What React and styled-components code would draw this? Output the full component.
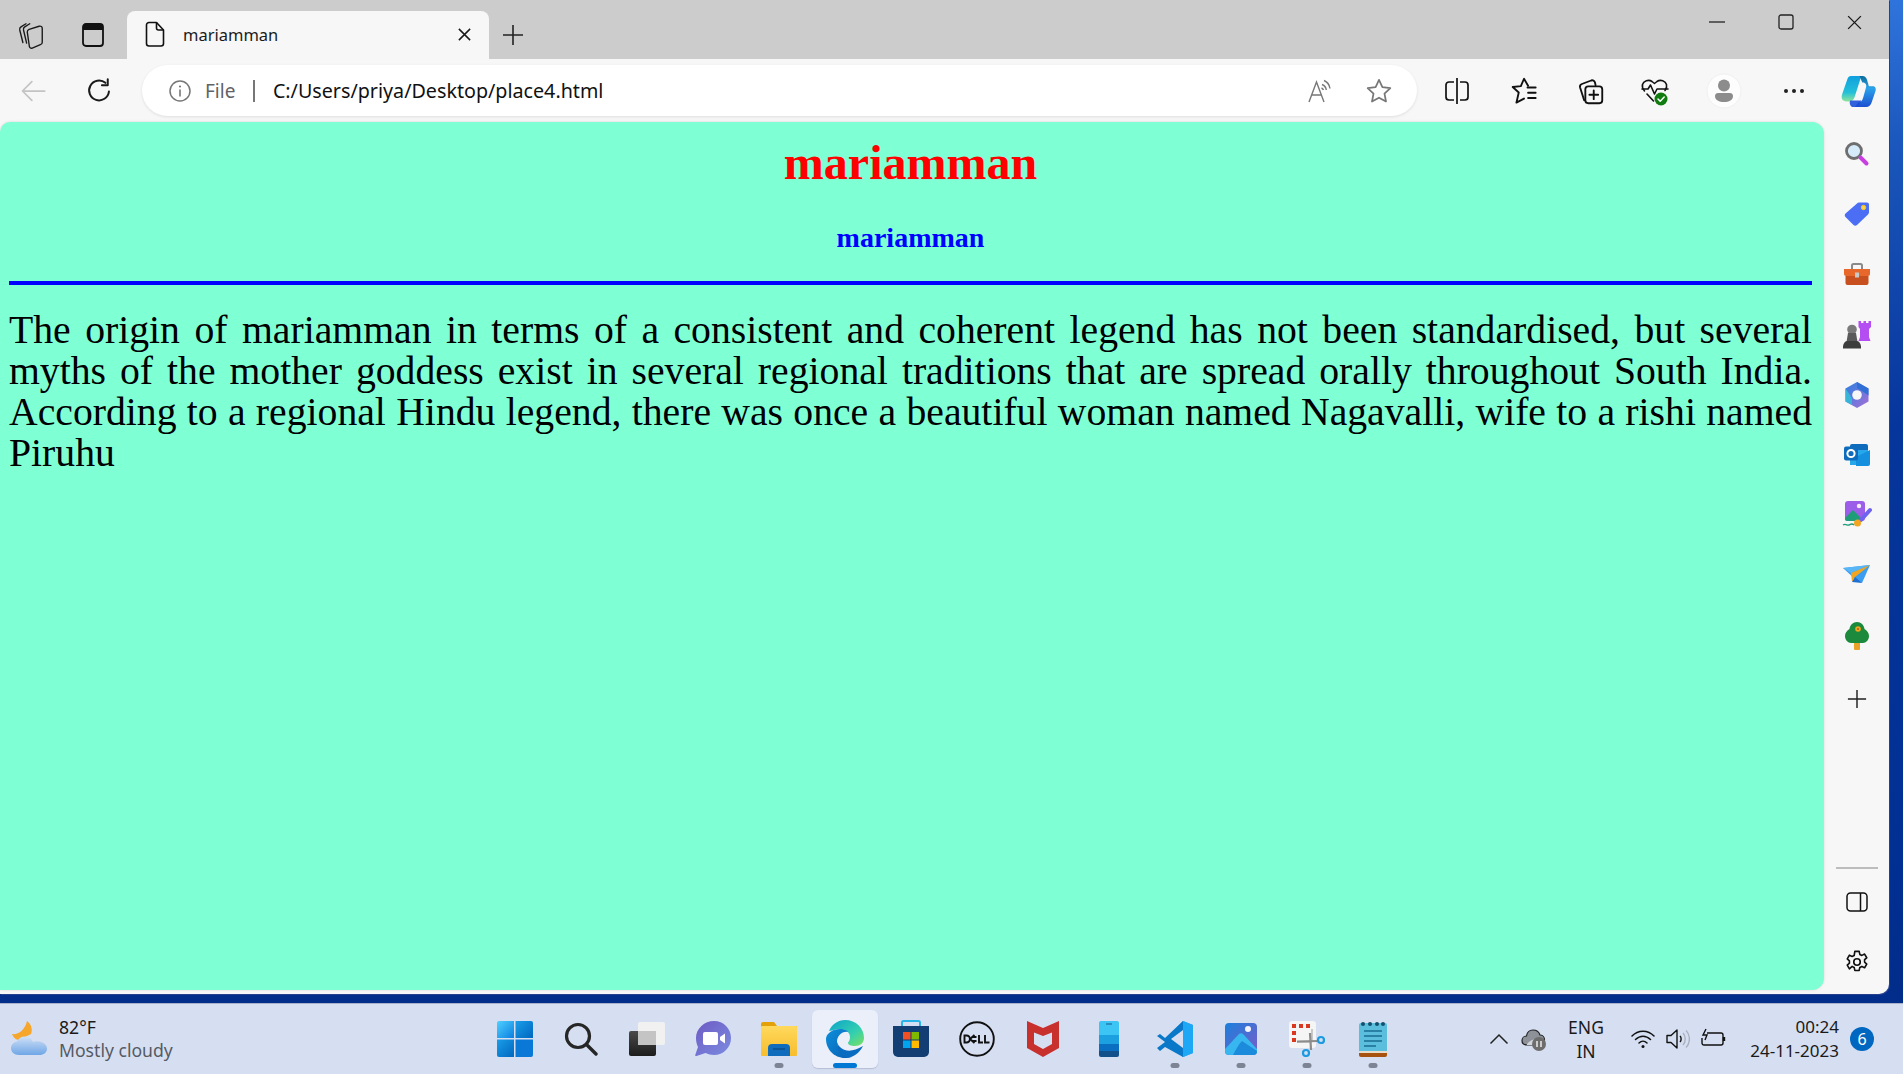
import React from "react";
import styled, { createGlobalStyle } from "styled-components";

const GlobalStyle = createGlobalStyle`
  html, body {
    margin: 0;
    padding: 0;
    overflow: hidden;
  }
  * {
    box-sizing: border-box;
  }
`;

const uiFont = `"Noto Sans", "Open Sans", sans-serif`;

const Desktop = styled.div`
  width: 1903px;
  height: 1074px;
  display: flex;
  flex-direction: column;
  overflow: hidden;
  font-family: ${uiFont};
  background: linear-gradient(180deg, #2f74dc 0%, #1a56bb 14%, #06359b 40%, #012f92 80%, #032b85 100%);
`;

const BrowserWindow = styled.div`
  width: 1889px;
  height: 994px;
  flex: none;
  display: flex;
  flex-direction: column;
  background: #f7f7f7;
  border-bottom-right-radius: 10px;
  box-shadow: 1px 1px 0 #24408f;
  overflow: hidden;
`;

const TitleBar = styled.div`
  height: 59px;
  flex: none;
  display: flex;
  align-items: flex-end;
  background: #cccccc;
`;

const TitleCell = styled.div`
  width: ${(props) => props.$width || 62}px;
  height: 48px;
  flex: none;
  display: flex;
  align-items: center;
  justify-content: center;
`;

const Tab = styled.div`
  width: 362px;
  height: 48px;
  margin-left: 3px;
  padding: 0 17px 2px 18px;
  flex: none;
  display: flex;
  align-items: center;
  background: #f7f7f7;
  border-radius: 8px 8px 0 0;
`;

const TabTitle = styled.span`
  margin-left: 18px;
  font-size: 16.5px;
  color: #1a1a1a;
`;

const TabClose = styled.div`
  margin-left: auto;
  display: flex;
`;

const WindowControls = styled.div`
  margin-left: auto;
  height: 44px;
  align-self: flex-start;
  display: flex;
`;

const WindowControl = styled.div`
  width: 69px;
  display: flex;
  align-items: center;
  justify-content: center;
`;

const Toolbar = styled.div`
  height: 63px;
  flex: none;
  display: flex;
  align-items: center;
`;

const NavCell = styled.div`
  width: ${(props) => props.$width || 66}px;
  height: 50px;
  flex: none;
  display: flex;
  align-items: center;
  justify-content: center;
`;

const AddressBar = styled.div`
  width: 1275px;
  height: 51px;
  margin-left: 10px;
  margin-right: 6px;
  padding: 0 24px 0 26px;
  flex: none;
  display: flex;
  align-items: center;
  background: #ffffff;
  border-radius: 26px;
  box-shadow: 0 1px 3px rgba(0, 0, 0, 0.1);
`;

const FileLabel = styled.span`
  margin-left: 13px;
  font-size: 19px;
  color: #5f6368;
`;

const Separator = styled.span`
  width: 1.5px;
  height: 22px;
  margin: 0 18px;
  background: #777777;
`;

const Url = styled.span`
  font-size: 19.7px;
  color: #111111;
`;

const AddressActions = styled.div`
  margin-left: auto;
  display: flex;
  align-items: center;
  gap: 32px;
`;

const Main = styled.div`
  flex: 1;
  display: flex;
  min-height: 0;
`;

const Page = styled.main`
  width: 1824px;
  height: 868px;
  flex: none;
  padding: 0 12px 0 9px;
  background: #7fffd4;
  border-radius: 10px 12px 12px 0;
  box-shadow: 0 0 3px rgba(0, 0, 0, 0.12);
  font-family: "Liberation Serif", "Times New Roman", serif;
`;

const PageTitle = styled.h1`
  margin: 13px 0 0;
  font-size: 48px;
  line-height: 55px;
  font-weight: 700;
  text-align: center;
  color: #ff0000;
`;

const PageSubtitle = styled.h2`
  margin: 32px 0 0;
  font-size: 28px;
  line-height: 32px;
  font-weight: 700;
  text-align: center;
  color: #0000ff;
`;

const Rule = styled.hr`
  height: 4px;
  margin: 27px 0 0;
  border: 0;
  background: #0000ff;
`;

const BodyText = styled.p`
  margin: 25px 0 0;
  font-size: 39.7px;
  line-height: 41px;
  text-align: justify;
  color: #000000;
`;

const Sidebar = styled.aside`
  width: 65px;
  flex: none;
  display: flex;
  flex-direction: column;
  align-items: center;
  padding: 2px 0 2px;
`;

const SideCell = styled.div`
  width: 100%;
  height: 60.2px;
  flex: none;
  margin-top: ${(props) => props.$gap || 0}px;
  display: flex;
  align-items: center;
  justify-content: center;
`;

const SideDivider = styled.div`
  width: 42px;
  height: 2px;
  margin-top: auto;
  margin-bottom: 3px;
  background: #bdbdbd;
`;

const Taskbar = styled.footer`
  height: 71px;
  margin-top: 9px;
  flex: none;
  display: grid;
  grid-template-columns: 482px auto 1fr;
  align-items: center;
  background: #d6dff2;
  border-top: 1px solid #a9b2c8;
`;

const Weather = styled.div`
  display: flex;
  align-items: center;
  padding-left: 11px;
  gap: 10px;
`;

const WeatherText = styled.div`
  display: flex;
  flex-direction: column;
  font-size: 17.6px;
  line-height: 23px;
`;

const WeatherTemp = styled.span`
  color: #1a1a1a;
`;

const WeatherInfo = styled.span`
  color: #555a63;
`;

const TaskIcons = styled.div`
  display: flex;
`;

const TaskItem = styled.div`
  position: relative;
  width: 66px;
  height: 58px;
  display: flex;
  align-items: center;
  justify-content: center;
  border-radius: 6px;
  background: ${(props) => (props.$active ? "rgba(255,255,255,.5)" : "transparent")};
  box-shadow: ${(props) => (props.$active ? "0 1px 1px rgba(120,130,160,.35)" : "none")};
`;

const RunDot = styled.span`
  position: absolute;
  left: 50%;
  bottom: 0;
  height: 5px;
  width: ${(props) => (props.$active ? 24 : 9)}px;
  transform: translateX(-50%);
  border-radius: 3px;
  background: ${(props) => (props.$active ? "#0078d4" : "#7d8494")};
`;

const Tray = styled.div`
  display: flex;
  align-items: center;
  padding-left: 78px;
  color: #1a1a1a;
`;

const TrayIcon = styled.div`
  width: ${(props) => props.$width}px;
  flex: none;
  display: flex;
  justify-content: center;
`;

const Language = styled.div`
  width: 60px;
  flex: none;
  margin: 0 9px 0 2px;
  font-size: 17.5px;
  line-height: 24px;
  text-align: center;
`;

const Clock = styled.div`
  width: 110px;
  margin-left: -4px;
  font-size: 17px;
  line-height: 24px;
  text-align: right;
`;

const Badge = styled.span`
  width: 24px;
  height: 24px;
  margin-left: 11px;
  flex: none;
  display: flex;
  align-items: center;
  justify-content: center;
  border-radius: 50%;
  font-size: 16px;
  color: #ffffff;
  background: #0067c0;
`;

const Line = ({ size = 24, width = 1.6, color = "#1a1a1a", children }) => (
  <svg width={size} height={size} viewBox="0 0 24 24" fill="none" stroke={color} strokeWidth={width} strokeLinecap="round" strokeLinejoin="round">
    {children}
  </svg>
);

const Art = ({ w = 40, h = 40, box = "0 0 40 40", children }) => (
  <svg width={w} height={h} viewBox={box}>
    {children}
  </svg>
);

const Workspaces = () => (
  <Line size={30} width={1.1}>
    <path d="M8 3 4 5.500C3 6.100 2.800 7 3 8l2.500 10" />
    <path d="M11 3 7 5.500C6 6.100 5.800 7 6 8l2.500 10.500" />
    <path d="M9 9.500c0-1 .6-1.700 1.500-2l8-2.500c1.500-.4 2.500.5 2.500 1.700v11c0 1-.5 1.700-1.500 2l-6.500 2.800c-1.200.4-2-.3-2.300-1.300z" />
  </Line>
);

const TabActions = () => (
  <svg width="24" height="26" viewBox="0 0 24 26">
    <rect x="2" y="2" width="20" height="22" rx="3" fill="none" stroke="#111" strokeWidth="1.800" />
    <path d="M2 5a3 3 0 0 1 3-3h14a3 3 0 0 1 3 3v3H2z" fill="#111" />
  </svg>
);

const FileIcon = () => (
  <svg width="20" height="26" viewBox="0 0 20 26" fill="none" stroke="#111" strokeWidth="1.600" strokeLinejoin="round">
    <path d="M4 1.500h7.500L18.500 9v13.500a2.500 2.500 0 0 1-2.500 2.500H4a2.500 2.500 0 0 1-2.500-2.500v-18.500A2.500 2.500 0 0 1 4 1.500z" />
    <path d="M11.500 1.500V7a2 2 0 0 0 2 2h5" />
  </svg>
);

const CloseIcon = ({ size = 16, width = 1.600 }) => (
  <svg width={size} height={size} viewBox="0 0 16 16" stroke="#1a1a1a" strokeWidth={width} fill="none">
    <path d="M2 2 14 14M14 2 2 14" />
  </svg>
);

const PlusIcon = ({ size = 22, color = "#222" }) => (
  <svg width={size} height={size} viewBox="0 0 22 22" stroke={color} strokeWidth="1.600" fill="none">
    <path d="M11 1v20M1 11h20" />
  </svg>
);

const BackIcon = () => (
  <Line size={28} width={1.500} color="#c4c4c4">
    <path d="M22 12H3M11 4l-8 8 8 8" />
  </Line>
);

const RefreshIcon = () => (
  <Line size={28} width={1.700} color="#1a1a1a">
    <path d="M20.500 12.500a8.500 8.500 0 1 1-3-7.500" />
    <path d="M19.500 2v5h-5" />
  </Line>
);

const InfoIcon = () => (
  <svg width="24" height="24" viewBox="0 0 24 24" fill="none">
    <circle cx="12" cy="12" r="10" stroke="#777" strokeWidth="1.500" />
    <path d="M12 10.500V17.500" stroke="#777" strokeWidth="1.600" />
    <circle cx="12" cy="7.500" r="1.100" fill="#777" />
  </svg>
);

const ReadAloud = () => (
  <svg width="26" height="26" viewBox="0 0 26 26" fill="none" stroke="#777" strokeWidth="1.400">
    <path d="M2 24 9.500 4 17 24M5 17h9" />
    <path d="M15 6.500c2.500 1 4 3 4.300 5.500M17 2.500c3.500 1.500 5.500 4.500 6 8M14.500 10c1 .4 1.600 1 2 2" />
  </svg>
);

const StarIcon = ({ color = "#777" }) => (
  <Line size={28} width={1.500} color={color}>
    <path d="m12 2.500 2.900 6.200 6.800.9-5 4.700 1.300 6.700-6-3.300-6 3.300 1.300-6.700-5-4.700 6.800-.9z" />
  </Line>
);

const SplitIcon = () => (
  <svg width="26" height="28" viewBox="0 0 26 28" fill="none" stroke="#111" strokeWidth="1.700">
    <path d="M13 1v26" />
    <path d="M10 5H5a3 3 0 0 0-3 3v12a3 3 0 0 0 3 3h5M16 5h5a3 3 0 0 1 3 3v12a3 3 0 0 1-3 3h-5" />
  </svg>
);

const FavoritesIcon = () => (
  <Line size={28} width={1.600} color="#111">
    <path d="M15.500 7.500 12 1.500 9.300 7.800l-7 .8 5.200 4.700L5.500 22l6.500-3.500" />
    <path d="M15 9h7M15.500 13.500H22M15.500 18H22" />
  </Line>
);

const CollectionsIcon = () => (
  <Line size={28} width={1.600} color="#111">
    <path d="M7 20 3.500 9c-.4-1.500.2-2.500 1.500-3l8-3c1.500-.5 2.800.2 3.200 1.500l.6 2.500" />
    <rect x="8" y="8" width="14.500" height="14.500" rx="2.500" />
    <path d="M15.200 11.500v7.500M11.500 15.200H19" />
  </Line>
);

const HealthIcon = () => (
  <svg width="30" height="30" viewBox="0 0 30 30" fill="none" stroke="#111" strokeWidth="1.600" strokeLinejoin="round" strokeLinecap="round">
    <path d="M4.500 15C2.500 12.500 2 10.500 2.500 8.500 3.500 5 8.500 3 12 5.500l2.500 2 2.500-2c3.500-2.500 8.500-.5 9.500 3 .5 2 0 4-1.500 6" />
    <path d="M2 13h6l2.500-4 4 9 2.500-5h11" />
    <path d="m7 18 6.500 7" />
    <circle cx="21" cy="23" r="6.500" fill="#107c10" stroke="none" />
    <path d="m18 23 2.200 2.200 4-4.200" stroke="#fff" strokeWidth="1.500" />
  </svg>
);

const ProfileIcon = () => (
  <svg width="36" height="42" viewBox="0 0 36 42">
    <circle cx="18" cy="21" r="17" fill="#fdfdfd" stroke="#f0f0f0" />
    <circle cx="18" cy="15.500" r="6" fill="#8c8c8c" />
    <path d="M9 26c0-2 1.500-3 3-3h12c1.500 0 3 1 3 3 0 4-4 6-9 6s-9-2-9-6z" fill="#8c8c8c" />
  </svg>
);

const DotsIcon = () => (
  <svg width="22" height="6" viewBox="0 0 22 6" fill="#222">
    <circle cx="3" cy="3" r="2" />
    <circle cx="11" cy="3" r="2" />
    <circle cx="19" cy="3" r="2" />
  </svg>
);

const CopilotIcon = () => (
  <Art w={37} h={34} box="0 0 38 36">
    <defs>
      <linearGradient id="cop1" x1="0" y1="0" x2="0" y2="1">
        <stop offset="0" stopColor="#0f9fe0" />
        <stop offset="0.65" stopColor="#23c0d8" />
        <stop offset="1" stopColor="#8ee59a" />
      </linearGradient>
      <linearGradient id="cop2" x1="0" y1="0" x2="0" y2="1">
        <stop offset="0" stopColor="#0b6a9a" />
        <stop offset="0.4" stopColor="#2aa2ea" />
        <stop offset="1" stopColor="#1c4fd0" />
      </linearGradient>
    </defs>
    <path d="M11 2h11l-7 22c-.8 3-3 5-6 5H6C2 29 .5 26 1.500 22L7 6c.6-2.500 2-4 4-4z" fill="url(#cop1)" />
    <path d="M20 2h3c3 0 4.500 2 5 4l2 7h4c2.500 0 4 2 3 5l-4 12c-1 3-3 5-6 5h-12l4-5c3 0 4-2 5-5l3-11c1-3-1-5-4-5z" fill="url(#cop2)" />
    <path d="M10 28h12l-3 7h-6c-2 0-4-3-3-7z" fill="#1a4fd8" opacity=".9" />
  </Art>
);

const MinIcon = () => (
  <svg width="16" height="4" viewBox="0 0 16 4" stroke="#222" strokeWidth="1.300">
    <path d="M0 2h16" />
  </svg>
);

const MaxIcon = () => (
  <svg width="16" height="16" viewBox="0 0 16 16" fill="none" stroke="#222" strokeWidth="1.300">
    <rect x="1" y="1" width="14" height="14" rx="2" />
  </svg>
);

const SearchSide = () => (
  <Art w={26} h={26} box="0 0 26 26">
    <circle cx="10" cy="10" r="7.500" fill="#d6ebfa" stroke="#6e6e6e" strokeWidth="2.800" />
    <path d="m16.500 16.500 6 6" stroke="#c83ee0" strokeWidth="4" strokeLinecap="round" />
  </Art>
);

const TagSide = () => (
  <Art w={26} h={26} box="0 0 26 26">
    <path d="M15 1.500h8a2 2 0 0 1 2 2v8a3 3 0 0 1-1 2L13 24c-1 1-2.500 1-3.500 0l-8-8c-1-1-1-2.500 0-3.500L13 2.500a3 3 0 0 1 2-1z" fill="#4c6ef5" />
    <circle cx="19.500" cy="6.500" r="2.200" fill="#ffd23f" stroke="#e8c33a" />
  </Art>
);

const ToolboxSide = () => (
  <Art w={28} h={24} box="0 0 28 24">
    <path d="M9 7V3.500A1.500 1.500 0 0 1 10.500 2h7A1.500 1.500 0 0 1 19 3.500V7" fill="none" stroke="#8a8a8a" strokeWidth="2" />
    <path d="M1 7h26v5c0 1-1 2-2 2H3c-1 0-2-1-2-2z" fill="#e8672a" />
    <path d="M2.500 14h23v7a2 2 0 0 1-2 2h-19a2 2 0 0 1-2-2z" fill="#c8501e" />
    <rect x="12" y="10.500" width="4" height="5" fill="#c9c9c9" />
  </Art>
);

const ChessSide = () => (
  <Art w={28} h={28} box="0 0 28 28">
    <path d="M15.500 0h2.500v2h2.500V0h2.500v2h2.500V0H28v6l-2 2v8l1.500 4h-12l1.500-4V8l-1.500-2z" fill="#b44ef2" />
    <circle cx="9" cy="8.500" r="4.800" fill="#7a7a7a" />
    <path d="M5 12h8l1.500 9h-11z" fill="#5a5a5a" />
    <path d="M0 26c0-3 2-6 4-6h10c2 0 4 3 4 6v1.500H0z" fill="#3d3d3d" />
  </Art>
);

const M365Side = () => (
  <Art w={26} h={28} box="0 0 26 28">
    <defs>
      <linearGradient id="m1" x1="0" y1="0" x2="1" y2="1">
        <stop offset="0" stopColor="#2b7fe0" />
        <stop offset="1" stopColor="#a66fd6" />
      </linearGradient>
    </defs>
    <path d="M13 1 24.500 7.500v13L13 27 1.500 20.500v-13z" fill="url(#m1)" />
    <path d="M13 1 24.500 7.500v7L18 10l-5-3z" fill="#2f6fd6" />
    <path d="M1.500 7.500v13L8 24v-6l-2-4z" fill="#38b4d8" />
    <circle cx="13" cy="14" r="4.800" fill="#f7f7f7" />
  </Art>
);

const OutlookSide = () => (
  <Art w={26} h={24} box="0 0 26 24">
    <path d="M8 1h14a2 2 0 0 1 2 2v4H6V3a2 2 0 0 1 2-2z" fill="#0f6cbd" />
    <rect x="6" y="7" width="18" height="15" fill="#28a8ea" />
    <path d="M12 14 26 7v14a2 2 0 0 1-2 2H12z" fill="#1490df" />
    <rect x="0" y="3.500" width="14" height="14" rx="2" fill="#0f6cbd" />
    <circle cx="7" cy="10.500" r="3.600" fill="none" stroke="#fff" strokeWidth="2" />
  </Art>
);

const DesignerSide = () => (
  <Art w={30} h={30} box="0 0 30 30">
    <rect x="3" y="1" width="20" height="20" rx="3" fill="#9c5de8" />
    <path d="M3 18 11 10l8 8v3H5a2 2 0 0 1-2-2z" fill="#1f9d78" />
    <circle cx="17" cy="6" r="2.200" fill="#f4ecff" />
    <path d="m28 10-9 10" stroke="#6f62f0" strokeWidth="4" strokeLinecap="round" />
    <circle cx="15.500" cy="23" r="3.500" fill="#f2a51f" />
    <path d="M1 25c3-2 4 1 6 0s3-2 5 0" fill="none" stroke="#1f9d78" strokeWidth="1.400" />
  </Art>
);

const SendSide = () => (
  <Art w={28} h={20} box="0 0 28 20">
    <path d="M0 3 27 0 19 18 12 14z" fill="#3b9df0" />
    <path d="M0 3 27 0 8 8z" fill="#58b6f7" />
    <path d="M27 0 8 8l1 9 3-5z" fill="#f2a51f" />
    <path d="m9 17 3-5 7 6z" fill="#1f6fd0" />
  </Art>
);

const TreeSide = () => (
  <Art w={24} h={28} box="0 0 24 28">
    <rect x="9" y="19" width="6" height="9" rx="1" fill="#e8a22a" />
    <path d="M12 0c4 0 7 3 7.500 7 2.500 1.500 4.500 4 4.500 7 0 4-3 7-6 7H6c-3 0-6-3-6-7 0-3 2-5.500 4.500-7C5 3 8 0 12 0z" fill="#1c8a3c" />
    <circle cx="13" cy="7" r="2.800" fill="#f2a51f" />
    <circle cx="13" cy="7" r="1" fill="#b25d0c" />
  </Art>
);

const PanelIcon = () => (
  <svg width="22" height="20" viewBox="0 0 22 20" fill="none" stroke="#111" strokeWidth="1.500">
    <rect x="1" y="1" width="20" height="18" rx="3.500" />
    <path d="M14.500 1v18" />
  </svg>
);

const GearIcon = () => (
  <Line size={26} width={1.500} color="#111">
    <circle cx="12" cy="12" r="3" />
    <path d="M10 2.200h4l.6 2.800 1.900.9 2.500-1.200 2 3.400-2 1.800v2.200l2 1.800-2 3.400-2.500-1.200-1.900.9-.6 2.800h-4l-.6-2.800-1.900-.9L5 18.300l-2-3.400 2-1.800v-2.200L3 9.100l2-3.400 2.500 1.200 1.900-.9z" />
  </Line>
);

const WeatherIcon = () => (
  <Art w={38} h={36} box="0 0 38 36">
    <defs>
      <linearGradient id="wx" x1="0" y1="0" x2="0" y2="1">
        <stop offset="0" stopColor="#cfe0f6" />
        <stop offset="1" stopColor="#6fa6e6" />
      </linearGradient>
    </defs>
    <path d="M16 0C20 3 22 8 20 13L8 19C5 19 2 16 1 13 7 14 14 9 16 0z" fill="#f5a62b" />
    <path d="M8 34c-5 0-8-3-8-7 0-3 2.500-6 6-6.500 1.500-3.500 5-5.500 9-5 3.500.5 6 2.500 7 5.500 1-.5 3-1 4.500-.8 6 .5 9.500 3.800 9.500 7.300 0 4-3 6.500-8 6.500z" fill="url(#wx)" />
  </Art>
);

const WindowsIcon = () => (
  <Art w={36} h={36} box="0 0 36 36">
    <defs>
      <linearGradient id="wa" x1="0" y1="0" x2="1" y2="1">
        <stop offset="0" stopColor="#4fd0ff" />
        <stop offset="1" stopColor="#0a7fe0" />
      </linearGradient>
      <linearGradient id="wb" x1="0" y1="0" x2="1" y2="1">
        <stop offset="0" stopColor="#1a9de8" />
        <stop offset="1" stopColor="#0067c0" />
      </linearGradient>
    </defs>
    <path d="M2 0h15v17H0V2a2 2 0 0 1 2-2z" fill="url(#wa)" />
    <path d="M18.500 0H34a2 2 0 0 1 2 2v15H18.500z" fill="url(#wb)" />
    <path d="M0 18.500h17V36H2a2 2 0 0 1-2-2z" fill="url(#wb)" />
    <path d="M18.500 18.500H36V34a2 2 0 0 1-2 2H18.500z" fill="#0a78d6" />
  </Art>
);

const SearchTask = () => (
  <Art w={34} h={34} box="0 0 34 34">
    <circle cx="14" cy="14" r="11.500" fill="none" stroke="#262626" strokeWidth="3.200" />
    <path d="m23 23 9 9" stroke="#262626" strokeWidth="3.400" strokeLinecap="round" />
  </Art>
);

const TaskViewIcon = () => (
  <Art w={36} h={34} box="0 0 36 34">
    <defs>
      <linearGradient id="tv" x1="0" y1="0" x2="0" y2="1">
        <stop offset="0" stopColor="#4a4a4a" />
        <stop offset="1" stopColor="#1c1c1c" />
      </linearGradient>
    </defs>
    <rect x="0" y="9" width="27" height="25" rx="2" fill="url(#tv)" />
    <rect x="9" y="0" width="27" height="23" rx="2" fill="#f1f1f1" />
    <rect x="9" y="9" width="18" height="14" fill="#c4c4c4" />
  </Art>
);

const ChatIcon = () => (
  <Art w={36} h={36} box="0 0 36 36">
    <defs>
      <linearGradient id="ch" x1="0" y1="0" x2="1" y2="1">
        <stop offset="0" stopColor="#6d5ac4" />
        <stop offset="1" stopColor="#7c8ce0" />
      </linearGradient>
    </defs>
    <path d="M19 0c9.500 0 17 7.500 17 17s-7.500 17-17 17c-3 0-6-.7-8.500-2L1.500 35c-1 .3-1.500-.4-1.200-1.300L3 26c-1.300-2.700-2-5.800-2-9C1 7.500 9.500 0 19 0z" fill="url(#ch)" />
    <rect x="8" y="11" width="15" height="13" rx="2" fill="#fff" />
    <path d="m25 16 5-3.500v10L25 19z" fill="#fff" />
  </Art>
);

const FolderIcon = () => (
  <Art w={36} h={34} box="0 0 36 34">
    <defs>
      <linearGradient id="fo" x1="0" y1="0" x2="0" y2="1">
        <stop offset="0" stopColor="#ffd95c" />
        <stop offset="1" stopColor="#f7bd2e" />
      </linearGradient>
    </defs>
    <path d="M0 2a2 2 0 0 1 2-2h11l3 4h20v6H0z" fill="#e3a008" />
    <rect x="0" y="4" width="36" height="30" rx="1" fill="url(#fo)" />
    <path d="M7 34v-8a4 4 0 0 1 4-4h14a4 4 0 0 1 4 4v8z" fill="#0f6cbd" />
    <path d="M12 27h12" stroke="#0a4d8c" strokeWidth="1.500" />
  </Art>
);

const EdgeIcon = () => (
  <Art w={38} h={38} box="0 0 38 38">
    <defs>
      <linearGradient id="ed1" x1="0" y1="0" x2="1" y2="1">
        <stop offset="0" stopColor="#0ca4c9" />
        <stop offset="0.6" stopColor="#33cfb0" />
        <stop offset="1" stopColor="#7ce05e" />
      </linearGradient>
      <linearGradient id="ed2" x1="0" y1="0" x2="1" y2="1">
        <stop offset="0" stopColor="#0c8fdc" />
        <stop offset="1" stopColor="#0a5db0" />
      </linearGradient>
    </defs>
    <path d="M3 11C6 4 12 0 19 0c11 0 19 8 19 18 0 5-4 8-9 8-4 0-7-1-7-3 0-1 2-2 2-6 0-5-5-8-10-8-5 0-9 2-11 2z" fill="url(#ed1)" />
    <path d="M0 19C0 14 6 9 14 9c5 0 8 2 8 3-6-1-11 4-11 10 0 8 8 15 16 14.500-3 1-6 1.500-8 1.500C8 38 0 29 0 19z" fill="url(#ed2)" />
    <path d="M11 22c3 9 13 12 26 4-4 8-10 11-15 11.500C15 37 11 30 11 22z" fill="#0a6cc0" />
  </Art>
);

const StoreIcon = () => (
  <Art w={36} h={38} box="0 0 36 38">
    <path d="M9 6V2.500A1.500 1.500 0 0 1 10.500 1h15A1.500 1.500 0 0 1 27 2.500V6" fill="none" stroke="#28b4e8" strokeWidth="2" />
    <path d="M0 6h36v26a5 5 0 0 1-5 5H5a5 5 0 0 1-5-5z" fill="#123e73" />
    <rect x="10" y="12" width="7.500" height="7.500" fill="#f25022" />
    <rect x="18.500" y="12" width="7.500" height="7.500" fill="#7fba00" />
    <rect x="10" y="20.500" width="7.500" height="7.500" fill="#00a4ef" />
    <rect x="18.500" y="20.500" width="7.500" height="7.500" fill="#ffb900" />
  </Art>
);

const DellIcon = () => (
  <Art w={36} h={36} box="0 0 36 36">
    <circle cx="18" cy="18" r="16.800" fill="none" stroke="#111" strokeWidth="1.900" />
    <g fill="none" stroke="#111" strokeWidth="1.900">
      <path d="M5.500 14.500v7h2a3.500 3.500 0 0 0 0-7z" />
      <path d="m15.500 14-4.500 4 4.500 4M13 16l4.500 0M13 20l4.500 0" />
      <path d="M20 14v7.500h4M26 14v7.500h4.500" />
    </g>
  </Art>
);

const McafeeIcon = () => (
  <Art w={32} h={36} box="0 0 32 36">
    <path d="M0 0 16 7 32 0v27l-16 9-16-9z" fill="#c8302e" />
    <path d="M7 11.500 16 15l9-3.500V23l-9 5-9-5z" fill="#d6dff2" />
  </Art>
);

const PhoneIcon = () => (
  <Art w={20} h={36} box="0 0 20 36">
    <path d="M2 0h16a2 2 0 0 1 2 2v12H0V2a2 2 0 0 1 2-2z" fill="#3cc4f5" />
    <rect y="14" width="20" height="9" fill="#1ca0e0" />
    <rect y="23" width="20" height="7" fill="#0a6fc0" />
    <path d="M0 30h20v4a2 2 0 0 1-2 2H2a2 2 0 0 1-2-2z" fill="#12508c" />
    <path d="M7 3h6" stroke="#123e73" strokeWidth=".8" />
  </Art>
);

const VsCodeIcon = () => (
  <Art w={36} h={36} box="0 0 36 36">
    <path d="M26 0 36 4v28l-10 4L8 19z" fill="#1f9cf0" />
    <path d="M26 0 8 17l-5-4-3 2 8 6-8 6 3 3 5-4L26 36z" fill="#0a78c8" />
    <path d="M26 9v18L14 18z" fill="#d6dff2" />
    <path d="M26 0 36 4v28l-10 4z" fill="#1ea7f5" />
  </Art>
);

const PhotosIcon = () => (
  <Art w={32} h={32} box="0 0 32 32">
    <defs>
      <linearGradient id="ph" x1="0" y1="0" x2="1" y2="1">
        <stop offset="0" stopColor="#1b7fdc" />
        <stop offset="1" stopColor="#7b5cc8" />
      </linearGradient>
    </defs>
    <rect width="32" height="32" rx="4" fill="url(#ph)" />
    <circle cx="23" cy="6" r="3" fill="#f4f4ff" />
    <path d="M0 26 14 11c1-1 3-1 4 0l14 15v2a4 4 0 0 1-4 4H4a4 4 0 0 1-4-4z" fill="#38b6f0" />
    <path d="M8 32c3-6 6-11 9-14l15 10v0a4 4 0 0 1-4 4z" fill="#1c8bdc" />
  </Art>
);

const SnipIcon = () => (
  <Art w={36} h={36} box="0 0 36 36">
    <rect width="27" height="27" rx="3" fill="#f5f5f5" />
    <g fill="#d9381e">
      <rect x="3" y="3" width="4" height="4" />
      <rect x="10" y="3" width="4" height="4" />
      <rect x="17" y="3" width="4" height="4" />
      <rect x="3" y="10" width="4" height="4" />
      <rect x="3" y="17" width="4" height="4" />
    </g>
    <path d="M8 21h13a2 2 0 0 0 2-2V8" fill="none" stroke="#c9c9c9" strokeWidth="2" />
    <path d="M8 20.500 29 20" stroke="#8c8c8c" strokeWidth="2.200" />
    <path d="M21 12 22 29" stroke="#8c8c8c" strokeWidth="2.200" />
    <circle cx="32" cy="19" r="3" fill="none" stroke="#1c9ae0" strokeWidth="2.200" />
    <circle cx="17" cy="32" r="3" fill="none" stroke="#1c9ae0" strokeWidth="2.200" />
  </Art>
);

const NotepadIcon = () => (
  <Art w={30} h={36} box="0 0 30 36">
    <rect y="2" width="28" height="30" rx="2" transform="translate(1 0)" fill="#5abedc" />
    <path d="M1 31h28v3a2 2 0 0 1-2 2H3a2 2 0 0 1-2-2z" fill="#a8520f" />
    <path d="M1 30h28v2H1z" fill="#e9dcc8" />
    <g fill="#12506e">
      <circle cx="5" cy="3" r="2" />
      <circle cx="12" cy="3" r="2" />
      <circle cx="19" cy="3" r="2" />
      <circle cx="25" cy="3" r="2" />
    </g>
    <path d="M6 10h18M6 15h18M6 20h18M6 25h12" stroke="#1a6f94" strokeWidth="1.500" />
  </Art>
);

const ChevronUp = () => (
  <svg width="20" height="12" viewBox="0 0 20 12" fill="none" stroke="#222" strokeWidth="1.500">
    <path d="m1.500 10.500 8.500-8.500 8.500 8.500" />
  </svg>
);

const CloudPaused = () => (
  <Art w={26} h={26} box="0 0 26 26">
    <path d="M6 19c-3.500 0-5-2-5-4.500S3 10 5.500 10c.5-3.500 3-6 6.500-6s6 2 7 5c2.500 0 4.500 2 4.500 4.500 0 3-2 5.500-5 5.500z" fill="#8d9198" stroke="#222" strokeWidth="1.200" />
    <path d="M6 18c2-3 6-5 12-6l5 2c0 3-2 5-5 5H6z" fill="#d0d4dc" />
    <circle cx="18" cy="18" r="7" fill="#6d6d6d" />
    <path d="M16 15v6M20 15v6" stroke="#fff" strokeWidth="1.300" />
  </Art>
);

const WifiIcon = () => (
  <svg width="24" height="20" viewBox="0 0 24 20" fill="none" stroke="#111" strokeWidth="1.500" strokeLinecap="round">
    <path d="M1 7c6-6.500 16-6.500 22 0M4.500 10.500c4.500-4.500 10.500-4.500 15 0M8 14c2.500-2.500 5.500-2.500 8 0" />
    <circle cx="12" cy="17.500" r="1.500" fill="#111" stroke="none" />
  </svg>
);

const VolumeIcon = () => (
  <svg width="24" height="22" viewBox="0 0 24 22" fill="none" strokeWidth="1.400">
    <path d="M1 7.500h4L11 2v18l-6-5.500H1z" stroke="#111" strokeLinejoin="round" />
    <path d="M14 8c1.500 1.500 1.500 4.500 0 6" stroke="#111" />
    <path d="M17 5c3 3 3 9 0 12M20 2.500c4.500 4.500 4.500 12.500 0 17" stroke="#aab0bd" />
  </svg>
);

const BatteryIcon = () => (
  <svg width="26" height="22" viewBox="0 0 26 22" fill="none" stroke="#111" strokeWidth="1.400">
    <path d="M6 5H20a2 2 0 0 1 2 2v8a2 2 0 0 1-2 2H3a2 2 0 0 1-2-2V10" />
    <path d="M23 9v4" strokeWidth="2.400" />
    <path d="M5 1 2 7h4l-2 5" />
  </svg>
);

const sideTop = [
  { id: "search", Icon: SearchSide },
  { id: "tag", Icon: TagSide },
  { id: "tools", Icon: ToolboxSide },
  { id: "games", Icon: ChessSide },
  { id: "m365", Icon: M365Side },
  { id: "outlook", Icon: OutlookSide },
  { id: "designer", Icon: DesignerSide },
  { id: "send", Icon: SendSide },
  { id: "tree", Icon: TreeSide },
];

const taskApps = [
  { id: "start", Icon: WindowsIcon },
  { id: "search", Icon: SearchTask },
  { id: "taskview", Icon: TaskViewIcon },
  { id: "chat", Icon: ChatIcon },
  { id: "files", Icon: FolderIcon, running: true },
  { id: "edge", Icon: EdgeIcon, active: true },
  { id: "store", Icon: StoreIcon },
  { id: "dell", Icon: DellIcon },
  { id: "mcafee", Icon: McafeeIcon },
  { id: "phone", Icon: PhoneIcon },
  { id: "code", Icon: VsCodeIcon, running: true },
  { id: "photos", Icon: PhotosIcon, running: true },
  { id: "snip", Icon: SnipIcon, running: true },
  { id: "notepad", Icon: NotepadIcon, running: true },
];

const toolbarIcons = [
  { Icon: SplitIcon, width: 67 },
  { Icon: FavoritesIcon, width: 67 },
  { Icon: CollectionsIcon, width: 65 },
  { Icon: HealthIcon, width: 65 },
  { Icon: ProfileIcon, width: 73 },
  { Icon: DotsIcon, width: 67 },
  { Icon: CopilotIcon, width: 62 },
];

export default function App() {
  return (
    <>
      <GlobalStyle />
      <Desktop>
        <BrowserWindow>
          <TitleBar>
            <TitleCell><Workspaces /></TitleCell>
            <TitleCell><TabActions /></TitleCell>
            <Tab>
              <FileIcon />
              <TabTitle>mariamman</TabTitle>
              <TabClose><CloseIcon size={15} /></TabClose>
            </Tab>
            <TitleCell $width={48}><PlusIcon /></TitleCell>
            <WindowControls>
              <WindowControl><MinIcon /></WindowControl>
              <WindowControl><MaxIcon /></WindowControl>
              <WindowControl><CloseIcon size={17} width={1.3} /></WindowControl>
            </WindowControls>
          </TitleBar>
          <Toolbar>
            <NavCell><BackIcon /></NavCell>
            <NavCell><RefreshIcon /></NavCell>
            <AddressBar>
              <InfoIcon />
              <FileLabel>File</FileLabel>
              <Separator />
              <Url>C:/Users/priya/Desktop/place4.html</Url>
              <AddressActions>
                <ReadAloud />
                <StarIcon />
              </AddressActions>
            </AddressBar>
            {toolbarIcons.map(({ Icon, width }, i) => (
              <NavCell $width={width} key={i}><Icon /></NavCell>
            ))}
          </Toolbar>
          <Main>
            <Page>
              <PageTitle>mariamman</PageTitle>
              <PageSubtitle>mariamman</PageSubtitle>
              <Rule />
              <BodyText>
                The origin of mariamman in terms of a consistent and coherent legend has not been standardised, but several myths of the mother goddess exist in several regional traditions that are spread orally throughout South India. According to a regional Hindu legend, there was once a beautiful woman named Nagavalli, wife to a rishi named Piruhu
              </BodyText>
            </Page>
            <Sidebar>
              {sideTop.map(({ id, Icon }) => (
                <SideCell key={id}><Icon /></SideCell>
              ))}
              <SideCell $gap={3}><PlusIcon size={20} /></SideCell>
              <SideDivider />
              <SideCell><PanelIcon /></SideCell>
              <SideCell><GearIcon /></SideCell>
            </Sidebar>
          </Main>
        </BrowserWindow>
        <Taskbar>
          <Weather>
            <WeatherIcon />
            <WeatherText>
              <WeatherTemp>82°F</WeatherTemp>
              <WeatherInfo>Mostly cloudy</WeatherInfo>
            </WeatherText>
          </Weather>
          <TaskIcons>
            {taskApps.map(({ id, Icon, running, active }) => (
              <TaskItem key={id} $active={active}>
                <Icon />
                {(running || active) && <RunDot $active={active} />}
              </TaskItem>
            ))}
          </TaskIcons>
          <Tray>
            <TrayIcon $width={30}><ChevronUp /></TrayIcon>
            <TrayIcon $width={40}><CloudPaused /></TrayIcon>
            <Language>ENG<br />IN</Language>
            <TrayIcon $width={36}><WifiIcon /></TrayIcon>
            <TrayIcon $width={34}><VolumeIcon /></TrayIcon>
            <TrayIcon $width={38}><BatteryIcon /></TrayIcon>
            <Clock>00:24<br />24-11-2023</Clock>
            <Badge>6</Badge>
          </Tray>
        </Taskbar>
      </Desktop>
    </>
  );
}
